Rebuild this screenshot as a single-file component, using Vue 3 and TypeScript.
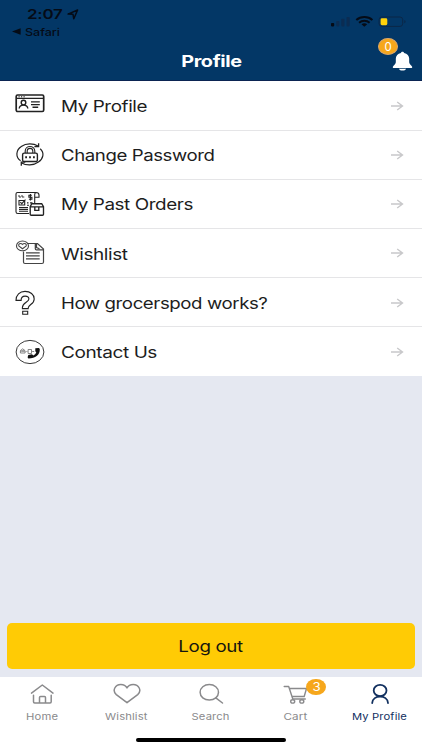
<script setup lang="ts">
import type { Directive } from 'vue'

interface MenuItem { id: string; label: string; width: number }
interface TabItem { id: string; label: string; width: number; badge?: number }

const menu: MenuItem[] = [
  { id: 'profile', label: 'My Profile', width: 86 },
  { id: 'password', label: 'Change Password', width: 153.5 },
  { id: 'orders', label: 'My Past Orders', width: 132 },
  { id: 'wishlist', label: 'Wishlist', width: 66.5 },
  { id: 'help', label: 'How grocerspod works?', width: 206.5 },
  { id: 'contact', label: 'Contact Us', width: 96 },
]

const tabs: TabItem[] = [
  { id: 'home', label: 'Home', width: 32 },
  { id: 'wishlist', label: 'Wishlist', width: 42.5 },
  { id: 'search', label: 'Search', width: 38 },
  { id: 'cart', label: 'Cart', width: 24, badge: 3 },
  { id: 'account', label: 'My Profile', width: 55 },
]
const activeTab = 'account'

// Widens a label's letterforms to the given width in pixels.
const vFit: Directive<HTMLElement, number> = {
  mounted(el, { value }) {
    el.style.transform = `scaleX(${value / el.getBoundingClientRect().width})`
  },
}
</script>

<template>
  <div class="screen">
    <header class="header">
      <div class="status">
        <div class="status-left">
          <div class="clock">
            <span v-fit="35.5" class="time">2:07</span>
            <svg class="location" width="12" height="11" viewBox="0 0 12 11">
              <path d="M1 5.1 10.6 1 6.8 9.8 6 5.3Z" />
            </svg>
          </div>
          <div class="back">
            <svg width="9" height="7" viewBox="0 0 9 7"><path d="M0 3.5 8.6 0.3V6.7Z" /></svg>
            <span v-fit="35" class="back-label">Safari</span>
          </div>
        </div>
        <svg class="status-icons" width="78" height="14" viewBox="0 0 78 14">
          <rect x="1" y="8" width="3.2" height="3.4" rx="0.8" fill="#050b16" />
          <g fill="#0b2c52">
            <rect x="6.2" y="6" width="3.2" height="5.4" rx="0.8" />
            <rect x="11.3" y="3.8" width="3.2" height="7.6" rx="0.8" />
            <rect x="16.5" y="2" width="3.2" height="9.4" rx="0.8" />
          </g>
          <g fill="none" stroke="#050b16" stroke-width="2">
            <path d="M26.3 4.9C30.7.9 38 .9 42.4 4.9" />
            <path d="M29.1 7.8C32.1 5.2 36.6 5.2 39.6 7.8" />
          </g>
          <path d="M31.5 9.2Q34.3 7.5 37.2 9.2L34.3 11.8Z" fill="#050b16" />
          <rect x="49.1" y="2" width="23.6" height="9.4" rx="2.7" fill="none" stroke="#0b2747" />
          <rect x="50.6" y="3.3" width="6.7" height="6.9" rx="1.4" fill="#ffd20a" />
          <path d="M74.3 5Q77 6.7 74.3 8.5Z" fill="#0b2747" />
        </svg>
      </div>
      <div class="title-bar">
        <h1 class="title"><span v-fit="60.5">Profile</span></h1>
        <button class="bell" aria-label="Notifications">
          <svg width="21" height="20" viewBox="0 0 22 21" preserveAspectRatio="none" fill="#fff">
            <path d="M11 .7c-1 0-1.6.6-1.700 1.400C6 2.800 4 5 4 8v3.800c0 2.100-2.500 3.200-3.100 4.800-.3 1 .2 1.300 1.100 1.300h18c.9 0 1.400-.4 1.100-1.300C20.500 15 18 13.900 18 11.800V8c0-3-2-5.200-5.300-5.900C12.600 1.300 12 .7 11 .7Z" />
            <path d="M7.200 18.600h7.600c-.5 1.400-2 2-3.800 2s-3.300-.6-3.800-2Z" />
          </svg>
          <span class="badge badge-bell">0</span>
        </button>
      </div>
    </header>

    <main class="content">
      <ul class="menu">
        <li v-for="item in menu" :key="item.id" class="row">
          <svg class="row-icon" width="30" height="26" viewBox="0 0 30 26" fill="none" stroke="#222" stroke-width="1.1">
            <template v-if="item.id === 'profile'">
              <rect x="1.2" y="2" width="27.5" height="16.5" rx="1.4" stroke-width="1.7" />
              <path d="M1.5 5.4h27M3.5 3.7h1.2M6 3.7h1.2M8.5 3.7h1.2" stroke-width="1.1" />
              <circle cx="8.5" cy="9.6" r="2.3" stroke-width="1.4" />
              <path d="M4.2 15.5c.2-2.1 1.7-3.4 4.3-3.4s4.1 1.3 4.3 3.4M16 8.9h8.800M16 11.600h8.800M17.500 14.300h5.700" stroke-width="1.4" />
            </template>
            <template v-else-if="item.id === 'password'">
              <path d="M5.6 18.8C.3 15.3.8 8 6.3 4.4 11.2.9 18.5 1.2 23 4M25.2 6.7c4.5 4 3.2 10-1.8 13.4C18.5 23.8 11 23.7 6.7 20.9" stroke-width="1.2" />
              <path d="M23.600 1.200v3.400h-4.200M6.300 23.800v-3.600h4" stroke-width="1.3" />
              <rect x="7.6" y="11.1" width="14.8" height="8.4" rx="1.6" stroke-width="1.4" />
              <path d="M10.2 11V9C10.2 2.900 19.800 2.900 19.800 9v2M12.200 11V9.100C12.200 5.500 17.800 5.500 17.800 9.100V11" />
              <path d="M10.200 15.300h1.800M14.100 15.300h1.800M18 15.300h1.800" stroke-width="1.9" />
            </template>
            <template v-else-if="item.id === 'orders'">
              <path d="M14 22.5H2.8Q1 22.5 1 20.7V3Q1 1.5 2.5 1.5H21Q19.7 2 19.7 3.5V12M21 1.5Q24 1.5 24 4v2.2h-4.1" />
              <path d="M4 4v2h2M7 4v2h2.300" stroke-width=".9" />
              <path d="M16.900 4.300h-3v2h3v2h-3M15.400 3v6.500" />
              <path d="M4 9.500h5.700V14H4ZM5.300 11.200l1.500 1.400 3.700-4M12 11.900h1.500M15 11.900h2.500M12 14.300h2M4 16.500h9M4 18.400h9M4 20.300h9" />
              <path d="M15.200 15.600 16.800 12.700H26.700L28.500 15.600V23.200Q28.500 24.200 27.500 24.200H16.200Q15.200 24.200 15.200 23.200ZM15.200 15.900h13.300M19.800 16v3.300h4V16" stroke-width="1.35" />
            </template>
            <template v-else-if="item.id === 'wishlist'">
              <path d="M12.300 3.500H22.500L28.500 9V22Q28.500 23.500 27 23.500H10Q8.500 23.500 8.500 22V11.500M20.300 4V8.700Q20.300 9.900 21.500 9.900H28M21.500 4v3.500l3 1.200M11 12.800h13.700M11 15.800h13.700M11 18.800h13.700" stroke="#444" stroke-width="1.2" />
              <ellipse cx="7.5" cy="5.9" rx="6" ry="4.9" stroke="#444" />
              <path d="M7.500 8.800 4 6.100C2.800 4.100 5.500 2.500 7.500 4.400 9.500 2.500 12.200 4.100 11 6.100Z" stroke="#444" />
            </template>
            <template v-else-if="item.id === 'help'">
              <path d="M1 10.400C1 5 4.700 1.400 10 1.400s9.200 3.100 9.200 7.500c0 5.400-6 5.600-6 9.200v.5H7.400v-1c0-5.100 6.500-5.200 6.500-8.500 0-1.800-1.500-3-3.800-3-2.500 0-4 1.600-4 4.300ZM7.700 21.300h5v2.900h-5Z" />
            </template>
            <template v-else>
              <ellipse cx="15" cy="13" rx="13.9" ry="11.6" stroke-width=".9" />
              <path d="M5.200 11.700 7.700 9.800 10.200 11.700M5.400 12v2h4.700v-2ZM6.500 12h2.700M13.100 10.500h3.400v4h-3.400ZM11.400 12.500h1M17.200 12.500h2" stroke="#777" stroke-width=".9" />
              <path d="M20.300 9.300 23.700 8.900Q24.800 9 24.800 10.500C24.800 16.200 20.400 19.400 13.600 19.400Q12.500 19.300 12.700 18L13.300 16 17 15.200 18.300 16.500Q20.400 15.700 21.300 13.500L20.300 12.300Z" fill="#111" stroke="none" />
            </template>
          </svg>
          <span v-fit="item.width" class="row-label">{{ item.label }}</span>
          <svg class="arrow" width="14" height="10" viewBox="0 0 14 10">
            <path d="M1 5H12.300M7.200 1 12.500 5 7.200 9" />
          </svg>
        </li>
      </ul>
      <button class="logout"><span v-fit="64.5">Log out</span></button>
    </main>

    <nav class="tabs">
      <a v-for="tab in tabs" :key="tab.id" class="tab" :class="{ active: tab.id === activeTab }">
        <span class="tab-icon">
          <svg width="28" height="22" viewBox="0 0 28 22" fill="none" stroke="currentColor" stroke-width="1.5" stroke-linecap="round" stroke-linejoin="round">
            <path v-if="tab.id === 'home'" d="M3.500 10.100 14.300 2 25 10.100M5.500 12.200V18.800Q5.500 20 6.700 20H22Q23.200 20 23.200 18.800V12.200M11.500 20V14.600Q11.500 13.600 12.500 13.600H16.500Q17.500 13.600 17.500 14.600V20" />
            <path v-else-if="tab.id === 'wishlist'" d="M14 19.700 3.300 11.600C-1.200 7.500 2.300 1.500 7.800 1.500 10.500 1.500 12.900 2.800 14 4.900 15.100 2.800 17.500 1.500 20.200 1.500 25.700 1.500 29.200 7.500 24.700 11.600Z" />
            <g v-else-if="tab.id === 'search'">
              <ellipse cx="12.3" cy="9.3" rx="9.2" ry="7.8" />
              <path d="M18.800 14.900 25.500 20" />
            </g>
            <g v-else-if="tab.id === 'cart'" stroke-width="1.4">
              <path d="M3.200 3.500H7.700L11.800 16H24.300M8.500 5.500H25.500L23.200 13.500H11" />
              <ellipse cx="11.7" cy="18.4" rx="2" ry="1.7" />
              <ellipse cx="20.8" cy="18.4" rx="2" ry="1.7" />
            </g>
            <g v-else stroke-width="1.8">
              <ellipse cx="14.1" cy="7.5" rx="6.4" ry="5.6" />
              <path d="M6.200 20C6.500 11.300 21.700 11.300 22 20" />
            </g>
          </svg>
          <span v-if="tab.badge" class="badge badge-cart"><span class="badge-num">{{ tab.badge }}</span></span>
        </span>
        <span v-fit="tab.width" class="tab-label">{{ tab.label }}</span>
      </a>
    </nav>
    <div class="home-indicator"><i></i></div>
  </div>
</template>

<style>
body { margin: 0; }
</style>

<style scoped>
.screen {
  width: 422px;
  height: 750px;
  display: flex;
  flex-direction: column;
  overflow: hidden;
  background: #fff;
  color: #1d1d1d;
  font-family: Inter, "Liberation Sans", sans-serif;
}
.screen * { box-sizing: border-box; }
button { border: 0; padding: 0; font: inherit; color: inherit; background: none; }
span { white-space: nowrap; }
.header {
  height: 81.4px;
  flex: none;
  background: #033766;
  border-bottom: 1px solid #0b2452;
}
.status {
  height: 41px;
  display: flex;
  justify-content: space-between;
  padding: 6px 14px 0 12px;
  color: #050b16;
}
.clock { display: flex; align-items: center; height: 17px; padding-left: 15px; }
.time { width: max-content; transform-origin: left; font-size: 13.5px; font-weight: 600; line-height: 17px; letter-spacing: -.2px; }
.location { margin-left: 11.5px; fill: none; stroke: #050b16; stroke-width: 1.5; stroke-linejoin: round; }
.back { display: flex; align-items: center; gap: 4px; height: 17px; }
.back svg { fill: #050b16; }
.back-label { font-size: 10.3px; font-weight: 500; transform-origin: left; }
.status-icons { margin-top: 8.5px; }
.title-bar {
  height: 39px;
  display: grid;
  grid-template-columns: 1fr auto 1fr;
  align-items: center;
}
.title { grid-column: 2; margin: 0; padding-top: 2px; color: #fff; font-size: 16px; font-weight: 700; line-height: 37px; letter-spacing: -.3px; }
.title span { display: block; }
.bell { position: relative; width: 21px; height: 20px; justify-self: end; margin-right: 9px; }
.bell svg { display: block; }
.badge {
  position: absolute;
  display: flex;
  align-items: center;
  justify-content: center;
  border-radius: 50%;
  background: #f6a71c;
  color: #fff;
}
.badge-num { transform: scaleX(1.15); }
.badge-bell { left: -14.2px; top: -12.5px; width: 20.5px; height: 17px; border: 1px solid #d8a56a; font-size: 11.5px; }
.content { flex: 1; display: flex; flex-direction: column; justify-content: space-between; background: #e5e8f1; }
.menu { margin: 0; padding: 0; list-style: none; background: #fff; }
.row {
  height: 49.17px;
  display: flex;
  align-items: center;
  padding: 0 18px 0 15px;
  border-bottom: 1px solid #e5e5e7;
}
.row:last-child { border-bottom-color: transparent; }
.row-icon { flex: none; margin: 1px 15.8px 0 0; }
.row-label { padding-top: 1.2px; font-size: 16px; line-height: 20px; letter-spacing: -.35px; transform-origin: left; }
.arrow { margin: 1px 0 0 auto; fill: none; stroke: #c8c8ca; stroke-width: 1.4; }
.logout {
  height: 46px;
  margin: 0 7px 8px;
  border-radius: 5px;
  background: #ffcb05;
  color: #15150f;
  font-size: 16px;
  letter-spacing: -.3px;
}
.logout span { display: inline-block; }
.tabs { height: 55px; flex: none; display: grid; grid-template-columns: repeat(5, 1fr); color: #8a8a8c; }
.tab { display: flex; flex-direction: column; align-items: center; padding-top: 6px; }
.tab.active { color: #12305f; }
.tab-icon { position: relative; height: 22px; }
.tab-icon svg { display: block; }
.tab-label { margin-top: 6px; font-size: 9.2px; line-height: 12px; letter-spacing: .1px; }
.badge-cart { left: 25px; top: -4px; width: 19.5px; height: 16px; font-size: 11.5px; }
.home-indicator { height: 18px; flex: none; display: flex; justify-content: center; padding-top: 6px; }
.home-indicator i { width: 150px; height: 4.3px; border-radius: 3px; background: #000; }
</style>
